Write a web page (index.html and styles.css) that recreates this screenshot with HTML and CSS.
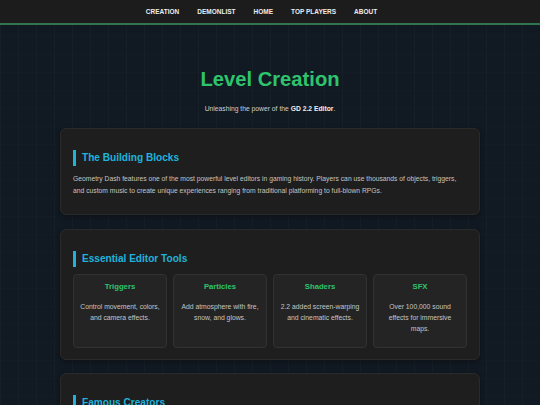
FILE: index.html
```html
<!DOCTYPE html>
<html lang="en">
<head>
  <meta charset="UTF-8">
  <meta name="viewport" content="width=device-width, initial-scale=1.0">
  <title>Level Creation</title>
  <link rel="stylesheet" href="styles.css">
</head>
<body>
  <header class="topbar">
    <a href="#" class="nav-link">CREATION</a>
    <a href="#" class="nav-link">DEMONLIST</a>
    <a href="#" class="nav-link">HOME</a>
    <a href="#" class="nav-link">TOP PLAYERS</a>
    <a href="#" class="nav-link">ABOUT</a>
  </header>

  <main class="page">
    <section class="hero">
      <h1 class="hero-title">Level Creation</h1>
      <p class="hero-sub">Unleashing the power of the <strong>GD 2.2 Editor</strong>.</p>
    </section>

    <section class="card">
      <h2 class="card-title">The Building Blocks</h2>
      <p class="card-text">Geometry Dash features one of the most powerful level editors in gaming history. Players can use thousands of objects, triggers, and custom music to create unique experiences ranging from traditional platforming to full-blown RPGs.</p>
    </section>

    <section class="card">
      <h2 class="card-title">Essential Editor Tools</h2>
      <div class="tool-grid">
        <div class="tool">
          <h3 class="tool-name">Triggers</h3>
          <p class="tool-desc">Control movement, colors, and camera effects.</p>
        </div>
        <div class="tool">
          <h3 class="tool-name">Particles</h3>
          <p class="tool-desc">Add atmosphere with fire, snow, and glows.</p>
        </div>
        <div class="tool">
          <h3 class="tool-name">Shaders</h3>
          <p class="tool-desc">2.2 added screen-warping and cinematic effects.</p>
        </div>
        <div class="tool">
          <h3 class="tool-name">SFX</h3>
          <p class="tool-desc">Over 100,000 sound effects for immersive maps.</p>
        </div>
      </div>
    </section>

    <section class="card">
      <h2 class="card-title">Famous Creators</h2>
      <p class="card-text">Some players are known less for beating levels and more for building them. Their work sets the bar for decoration, gameplay and sync across the whole community.</p>
    </section>
  </main>
</body>
</html>
```

FILE: styles.css
```css
body {
  margin: 0;
  font-family: "Liberation Sans", Arial, sans-serif;
  color: #c4c4c4;
  background-color: #111922;
  background-image:
    linear-gradient(90deg, rgba(255, 255, 255, 0.02) 1px, transparent 1px),
    linear-gradient(rgba(255, 255, 255, 0.008) 1px, transparent 1px);
  background-size: 18px 18px;
}

/* top navigation */
.topbar {
  height: 23px;
  display: flex;
  justify-content: center;
  align-items: center;
  gap: 18px;
  padding-right: 17px;
  background-color: #1c1c1c;
  border-bottom: 2px solid #2f7550;
}
.nav-link {
  color: #ececec;
  text-decoration: none;
  font-size: 6.5px;
  font-weight: bold;
}

.page {
  max-width: 420px;
  margin: 0 auto;
  display: flex;
  flex-direction: column;
  gap: 13.5px;
  padding-bottom: 30px;
}

.hero {
  text-align: center;
  padding-top: 42px;
}
.hero-title {
  margin: 0;
  font-size: 20.2px;
  line-height: 24px;
  color: #2ec46d;
}
.hero-sub {
  margin: 11.5px 0 1px;
  font-size: 6.75px;
  line-height: 11px;
  color: #cfcfcf;
}
.hero-sub strong {
  color: #f0f0f0;
}

/* content cards */
.card {
  background-color: #1e1e1e;
  border: 1px solid #2a2a2a;
  border-radius: 6px;
  padding: 21px 12px 11px;
  box-shadow: 0 2px 6px rgba(0, 0, 0, 0.35);
}
.card-title {
  margin: 0 0 7px;
  padding-left: 6px;
  border-left: 3px solid #1fb3dc;
  font-size: 10.1px;
  line-height: 16px;
  color: #1fb3dc;
}
.card-text {
  margin: 0 0 7px;
  font-size: 6.75px;
  line-height: 11.5px;
}

.tool-grid {
  display: grid;
  grid-template-columns: repeat(4, 1fr);
  gap: 6px;
}
.tool {
  background-color: #242424;
  border: 1px solid #323232;
  border-radius: 4px;
  padding: 7px 6px;
  text-align: center;
}
.tool-name {
  margin: 0 0 9px;
  font-size: 7.7px;
  line-height: 10px;
  color: #2ec46d;
}
.tool-desc {
  margin: 0 0 6px;
  font-size: 6.8px;
  line-height: 11px;
}
```
